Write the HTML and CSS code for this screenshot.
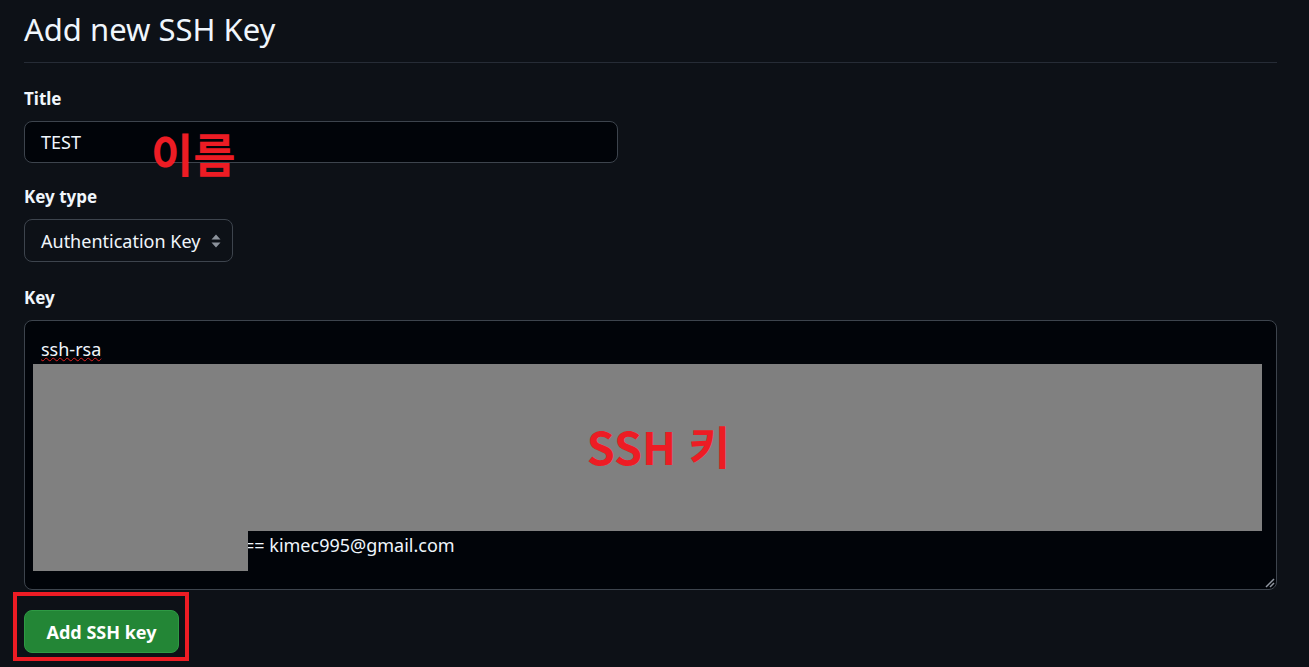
FILE: index.html
```html
<!DOCTYPE html>
<html lang="ko">
<head>
<meta charset="utf-8">
<title>Add new SSH Key</title>
<link rel="stylesheet" href="styles.css">
</head>
<body>
<div class="page">
  <h2 class="heading">Add new SSH Key</h2>
  <form class="form">
    <div class="field">
      <label class="label">Title</label>
      <div class="input-wrap">
        <div class="input">TEST</div>
        <span class="note note-name">이름</span>
      </div>
    </div>
    <div class="field">
      <label class="label">Key type</label>
      <div class="select">
        <span>Authentication Key</span>
        <svg class="select-arrows" width="10" height="14" viewBox="0 0 10 14"><path d="M5 0.5 L9.5 5.5 H0.5 Z M5 13.5 L9.5 8.5 H0.5 Z" fill="#8b929b"/></svg>
      </div>
    </div>
    <div class="field field-key">
      <label class="label">Key</label>
      <div class="textarea">
        <div class="ta-line"><span class="squiggle">ssh-rsa</span></div>
        <div class="ta-rest">
          <div class="redact-main"><span class="note note-key">SSH 키</span></div>
          <div class="redact-tail-row">
            <div class="redact-tail"></div>
            <span class="ta-tail-text">== kimec995@gmail.com</span>
          </div>
        </div>
        <svg class="resize" width="12" height="12" viewBox="0 0 12 12"><path d="M3 11 L11 3 M7 11 L11 7" stroke="#9198a1" stroke-width="1.5"/></svg>
      </div>
    </div>
    <div class="actions">
      <div class="highlight">
        <button type="button" class="btn">Add SSH key</button>
      </div>
    </div>
  </form>
</div>
</body>
</html>
```
FILE: styles.css
```css
html, body {
  margin: 0;
  padding: 0;
  background: #0d1117;
  color: #f0f6fc;
  font-family: "Noto Sans", "Liberation Sans", sans-serif;
}
.page {
  padding: 0 32px 0 24px;
}
.heading {
  margin: 0;
  padding: 9px 0 13px;
  font-size: 31px;
  font-weight: 400;
  line-height: 40px;
  border-bottom: 1px solid #262c36;
}
.form {
  display: flex;
  flex-direction: column;
}
.field {
  display: flex;
  flex-direction: column;
  align-items: flex-start;
}
.field:first-child { margin-top: 24px; }
.label {
  font-size: 17px;
  font-weight: 700;
  line-height: 24px;
  margin-bottom: 10px;
}
.field + .field { margin-top: 22px; }
.field-key.field { margin-top: 24px; }
.input-wrap {
  position: relative;
  width: 594px;
}
.input {
  box-sizing: border-box;
  height: 42px;
  border: 1px solid #3d444d;
  border-radius: 8px;
  background: #010409;
  padding: 0 16px;
  font-size: 18px;
  line-height: 40px;
}
.note {
  position: absolute;
  color: #ed1c24;
  font-family: "Noto Sans CJK KR", "Noto Sans", sans-serif;
  font-weight: 700;
  font-size: 46px;
  line-height: 1;
  white-space: nowrap;
}
.note-name {
  left: 127px;
  top: 8px;
}
.select {
  box-sizing: border-box;
  height: 43px;
  width: 209px;
  border: 1px solid #3d444d;
  border-radius: 8px;
  background: #0d1117;
  padding: 0 11px 0 16px;
  display: flex;
  align-items: center;
  justify-content: space-between;
  font-size: 18px;
}
.select-arrows { display: block; }
.textarea {
  position: relative;
  box-sizing: border-box;
  align-self: stretch;
  height: 270px;
  border: 1px solid #3d444d;
  border-radius: 8px;
  background: #010409;
  padding: 14px 14px 0 8px;
  font-size: 18px;
}
.ta-line {
  padding-left: 8px;
  line-height: 28px;
}
.squiggle {
  text-decoration: underline wavy #e02020;
  text-decoration-thickness: 1px;
  text-underline-offset: 1px;
}
.ta-rest {
  display: flex;
  flex-direction: column;
  margin-top: 1px;
}
.redact-main {
  position: relative;
  height: 167px;
  background: #808080;
  display: flex;
  align-items: center;
  justify-content: center;
}
.redact-main .note-key {
  position: static;
  font-size: 45px;
  margin-left: 22px;
  margin-bottom: 4px;
}
.redact-tail-row {
  display: flex;
  align-items: flex-start;
}
.redact-tail {
  width: 215px;
  height: 40px;
  background: #808080;
  position: relative;
  z-index: 1;
}
.ta-tail-text {
  margin-left: -4px;
  margin-top: 2px;
  line-height: 24px;
  white-space: nowrap;
}
.resize {
  position: absolute;
  right: 1px;
  bottom: 1px;
}
.actions {
  display: flex;
  margin-top: 2px;
}
.highlight {
  margin-left: -11px;
  border: 4px solid #ed1c24;
  padding: 14px 6px 4px 7px;
}
.btn {
  height: 43px;
  width: 155px;
  border: 1px solid #2e9a44;
  border-radius: 8px;
  background: #238636;
  color: #ffffff;
  font-family: "Noto Sans", "Liberation Sans", sans-serif;
  font-size: 18px;
  font-weight: 700;
  padding: 0;
}
```
